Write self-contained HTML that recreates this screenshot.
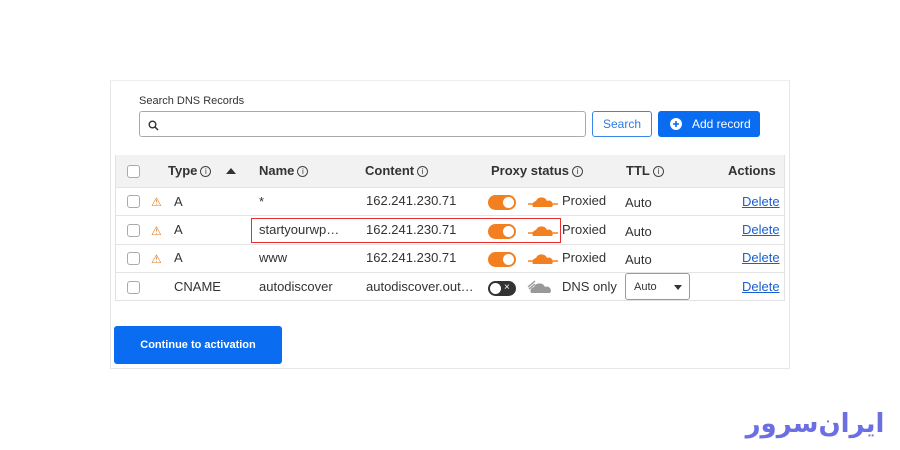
<!DOCTYPE html>
<html><head><meta charset="utf-8"><style>
*{box-sizing:border-box;margin:0;padding:0}
body{width:900px;height:450px;background:#fff;font-family:"Liberation Sans",Arial,sans-serif;position:relative;overflow:hidden;color:#333}
.a{position:absolute}
.card{left:110px;top:80px;width:680px;height:289px;border:1px solid #e6e6e6;border-top:1px solid #eee}
.tbl{left:115px;top:155px;width:670px;height:146px;border:1px solid #e2e2e2;border-top:none}
.hdr{left:115px;top:155px;width:670px;height:32px;background:#f2f2f2}
.line{left:115px;width:670px;height:1px;background:#e4e4e4}
.t{font-size:13px;color:#333;white-space:nowrap;line-height:16px}
.h{font-size:13px;font-weight:bold;color:#333;white-space:nowrap;line-height:16px}
.i{font-weight:normal;font-size:12px;display:inline-block;width:11px;height:11px;border:1px solid #444;border-radius:50%;font-size:8px;line-height:10px;text-align:center;vertical-align:1px;margin-left:3px}
.cb{width:13px;height:13px;border:1px solid #aaa;border-radius:3px;background:#fff}
.del{font-size:13px;color:#1a5fd0;text-decoration:underline;line-height:16px}
.tog{width:28px;height:15px;border-radius:8px;background:#f38020}
.tog:after{content:"";position:absolute;right:2px;top:2px;width:11px;height:11px;border-radius:50%;background:#fff}
.tog.off{background:#333}
.tog.off:after{left:2px;right:auto}
</style></head><body>
<div class="a card"></div>
<div class="a t" style="left:139px;top:93px;font-size:11px">Search DNS Records</div>
<div class="a" style="left:139px;top:111px;width:447px;height:26px;border:1px solid #aaa;border-radius:3px"></div>
<svg class="a" style="left:148px;top:120px" width="11" height="11" viewBox="0 0 11 11"><circle cx="4.5" cy="4.5" r="3.3" fill="none" stroke="#333" stroke-width="1.4"/><path d="M7 7l3 3" stroke="#333" stroke-width="1.5"/></svg>
<div class="a" style="left:592px;top:111px;width:60px;height:26px;border:1px solid #3a86e8;border-radius:3px;color:#2f7be0;font-size:12px;text-align:center;line-height:24px">Search</div>
<div class="a" style="left:658px;top:111px;width:102px;height:26px;background:#0a6cf0;border-radius:3px;color:#fff;font-size:12px;line-height:26px;padding-left:34px">Add record</div>
<svg class="a" style="left:670px;top:118px" width="12" height="12"><circle cx="6" cy="6" r="6" fill="#fff"/><path d="M6 3v6M3 6h6" stroke="#0a6cf0" stroke-width="1.6"/></svg>
<div class="a hdr"></div>
<div class="a tbl"></div>
<div class="a line" style="top:187px"></div>
<div class="a line" style="top:215px"></div>
<div class="a line" style="top:244px"></div>
<div class="a line" style="top:272px"></div>
<div class="a cb" style="left:127px;top:165px"></div>
<div class="a h" style="left:168px;top:163px">Type<span class="i">i</span></div>
<div class="a" style="left:226px;top:168px;width:0;height:0;border-left:5px solid transparent;border-right:5px solid transparent;border-bottom:6px solid #333"></div>
<div class="a h" style="left:259px;top:163px">Name<span class="i">i</span></div>
<div class="a h" style="left:365px;top:163px">Content<span class="i">i</span></div>
<div class="a h" style="left:491px;top:163px">Proxy status<span class="i">i</span></div>
<div class="a h" style="left:626px;top:163px">TTL<span class="i">i</span></div>
<div class="a h" style="left:728px;top:163px">Actions</div>

<!-- rows -->
<div class="a cb" style="left:127px;top:195px"></div><div class="a" style="left:151px;top:195px;color:#e07a1e;font-size:12px">⚠</div>
<div class="a t" style="left:174px;top:194px">A</div><div class="a t" style="left:259px;top:194px">*</div><div class="a t" style="left:366px;top:193px">162.241.230.71</div>
<div class="a tog" style="left:488px;top:195px"></div>
<svg class="a" style="left:527px;top:196px" width="32" height="12"><path d="M1 8h5M26 8h5" stroke="#f38020" stroke-width="1.4"/><path d="M6 11a4 4 0 0 1 3-6 6 6 0 0 1 11 0 4 4 0 0 1 5 6z" fill="#f38020"/></svg>
<div class="a t" style="left:562px;top:193px">Proxied</div><div class="a t" style="left:625px;top:195px">Auto</div><div class="a del" style="left:742px;top:194px">Delete</div>

<div class="a cb" style="left:127px;top:224px"></div><div class="a" style="left:151px;top:224px;color:#e07a1e;font-size:12px">⚠</div>
<div class="a t" style="left:174px;top:222px">A</div><div class="a t" style="left:259px;top:222px">startyourwp…</div><div class="a t" style="left:366px;top:222px">162.241.230.71</div>
<div class="a tog" style="left:488px;top:224px"></div>
<svg class="a" style="left:527px;top:225px" width="32" height="12"><path d="M1 8h5M26 8h5" stroke="#f38020" stroke-width="1.4"/><path d="M6 11a4 4 0 0 1 3-6 6 6 0 0 1 11 0 4 4 0 0 1 5 6z" fill="#f38020"/></svg>
<div class="a t" style="left:562px;top:222px">Proxied</div><div class="a t" style="left:625px;top:224px">Auto</div><div class="a del" style="left:742px;top:222px">Delete</div>
<div class="a" style="left:251px;top:218px;width:310px;height:25px;border:1px solid #e53030"></div>

<div class="a cb" style="left:127px;top:252px"></div><div class="a" style="left:151px;top:252px;color:#e07a1e;font-size:12px">⚠</div>
<div class="a t" style="left:174px;top:250px">A</div><div class="a t" style="left:259px;top:250px">www</div><div class="a t" style="left:366px;top:250px">162.241.230.71</div>
<div class="a tog" style="left:488px;top:252px"></div>
<svg class="a" style="left:527px;top:253px" width="32" height="12"><path d="M1 8h5M26 8h5" stroke="#f38020" stroke-width="1.4"/><path d="M6 11a4 4 0 0 1 3-6 6 6 0 0 1 11 0 4 4 0 0 1 5 6z" fill="#f38020"/></svg>
<div class="a t" style="left:562px;top:250px">Proxied</div><div class="a t" style="left:625px;top:252px">Auto</div><div class="a del" style="left:742px;top:250px">Delete</div>

<div class="a cb" style="left:127px;top:281px"></div>
<div class="a t" style="left:174px;top:279px">CNAME</div><div class="a t" style="left:259px;top:279px">autodiscover</div><div class="a t" style="left:366px;top:279px">autodiscover.out…</div>
<div class="a tog off" style="left:488px;top:281px"></div><div class="a" style="left:504px;top:280px;color:#fff;font-size:10px;line-height:16px">×</div>
<svg class="a" style="left:526px;top:277px" width="28" height="18"><path d="M2 10l7-6M3 12l6-5" stroke="#999" stroke-width="1.4"/><path d="M5 16a4 4 0 0 1 3-6 6 6 0 0 1 11 0 4 4 0 0 1 5 6z" fill="#999"/></svg>
<div class="a t" style="left:562px;top:279px">DNS only</div>
<div class="a" style="left:625px;top:273px;width:65px;height:27px;border:1px solid #999;border-radius:3px;font-size:11px;line-height:27px;padding-left:8px">Auto</div>
<div class="a" style="left:674px;top:285px;border-left:4px solid transparent;border-right:4px solid transparent;border-top:5px solid #333"></div>
<div class="a del" style="left:742px;top:279px">Delete</div>

<div class="a" style="left:114px;top:326px;width:168px;height:38px;background:#0a6cf0;border-radius:3px;color:#fff;font-size:11px;font-weight:bold;text-align:center;line-height:38px">Continue to activation</div>

<div class="a" style="left:735px;top:404px;width:160px;text-align:center;font-family:'DejaVu Sans',sans-serif;font-weight:bold;font-size:26px;line-height:40px;color:#6b6fe2;direction:rtl;white-space:nowrap;letter-spacing:-1px">ایران‌سرور</div>
</body></html>
